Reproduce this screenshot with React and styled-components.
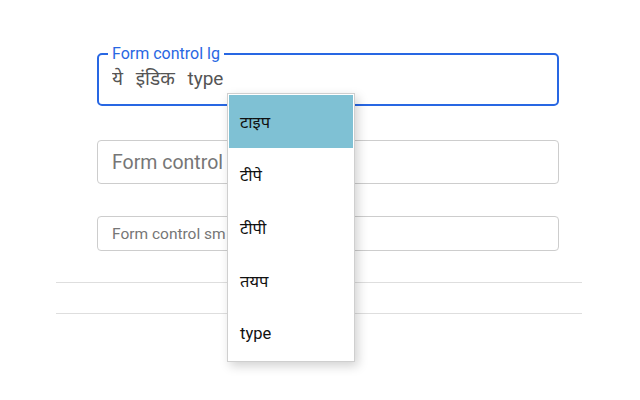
import React from "react"
import styled, { createGlobalStyle } from "styled-components"

const Global = createGlobalStyle`
  body {
    margin: 0;
    background: #fff;
    font-family: Roboto, "Noto Sans", "Noto Sans Devanagari", sans-serif;
  }
`

const Page = styled.div`
  width: 640px;
  height: 400px;
  padding: 46px 0 0 56px;
  box-sizing: border-box;
`

const Form = styled.div`
  width: 462px;
  margin-left: 41px;
  display: flex;
  flex-direction: column;
`

const Group = styled.div`
  position: relative;
  margin-bottom: ${(p) => p.gap}px;
`

const Fieldset = styled.fieldset`
  margin: 0;
  padding: 0 12px 0 13px;
  border: 2px solid #2867e3;
  border-radius: 5px;
  height: 60px;
  box-sizing: border-box;
`

const Legend = styled.legend`
  padding: 0 4px;
  margin-left: -4px;
  font-size: 16px;
  line-height: 16px;
  color: #2867e3;
`

const FloatInput = styled.input`
  display: block;
  width: 100%;
  border: 0;
  outline: 0;
  padding: 0;
  height: 32px;
  font-family: inherit;
  font-size: 19px;
  word-spacing: 8px;
  color: #555;
  background: transparent;
`

const Input = styled.input`
  display: block;
  width: 100%;
  box-sizing: border-box;
  height: ${(p) => (p.small ? 35 : 44)}px;
  padding: 0 14px;
  border: 1px solid #cdcdcd;
  border-radius: 4px;
  outline: 0;
  font-family: inherit;
  font-size: ${(p) => (p.small ? 15.5 : 19.5)}px;
  color: #555;
  &::placeholder {
    color: #767676;
  }
`

const Rule = styled.hr`
  width: 526px;
  margin: 0;
  border: 0;
  border-top: 1px solid #dedede;
  margin-bottom: 30px;
`

const Menu = styled.ul`
  position: absolute;
  left: 130px;
  top: 47px;
  width: 128px;
  margin: 0;
  padding: 1px;
  box-sizing: border-box;
  list-style: none;
  background: #fff;
  border: 1px solid #cfcfcf;
  box-shadow: 3px 4px 10px rgba(0, 0, 0, 0.18);
  z-index: 5;
`

const Item = styled.li`
  height: 53px;
  display: flex;
  align-items: center;
  padding-left: 11px;
  padding-bottom: 0;
  box-sizing: border-box;
  font-size: 16.5px;
  color: #111;
  background: ${(p) => (p.active ? "#7fc1d4" : "transparent")};
`

const suggestions = ["टाइप", "टीपे", "टीपी", "तयप", "type"]

export default function App() {
  return (
    <Page>
      <Global />
      <Form>
        <Group gap={34}>
          <Fieldset>
            <Legend>Form control lg</Legend>
            <FloatInput readOnly value="ये इंडिक type" />
          </Fieldset>
          <Menu>
            {suggestions.map((s, i) => (
              <Item key={s} active={i === 0}>
                {s}
              </Item>
            ))}
          </Menu>
        </Group>
        <Group gap={32}>
          <Input placeholder="Form control" />
        </Group>
        <Group gap={31}>
          <Input small placeholder="Form control sm" />
        </Group>
      </Form>
      <Rule />
      <Rule />
    </Page>
  )
}
